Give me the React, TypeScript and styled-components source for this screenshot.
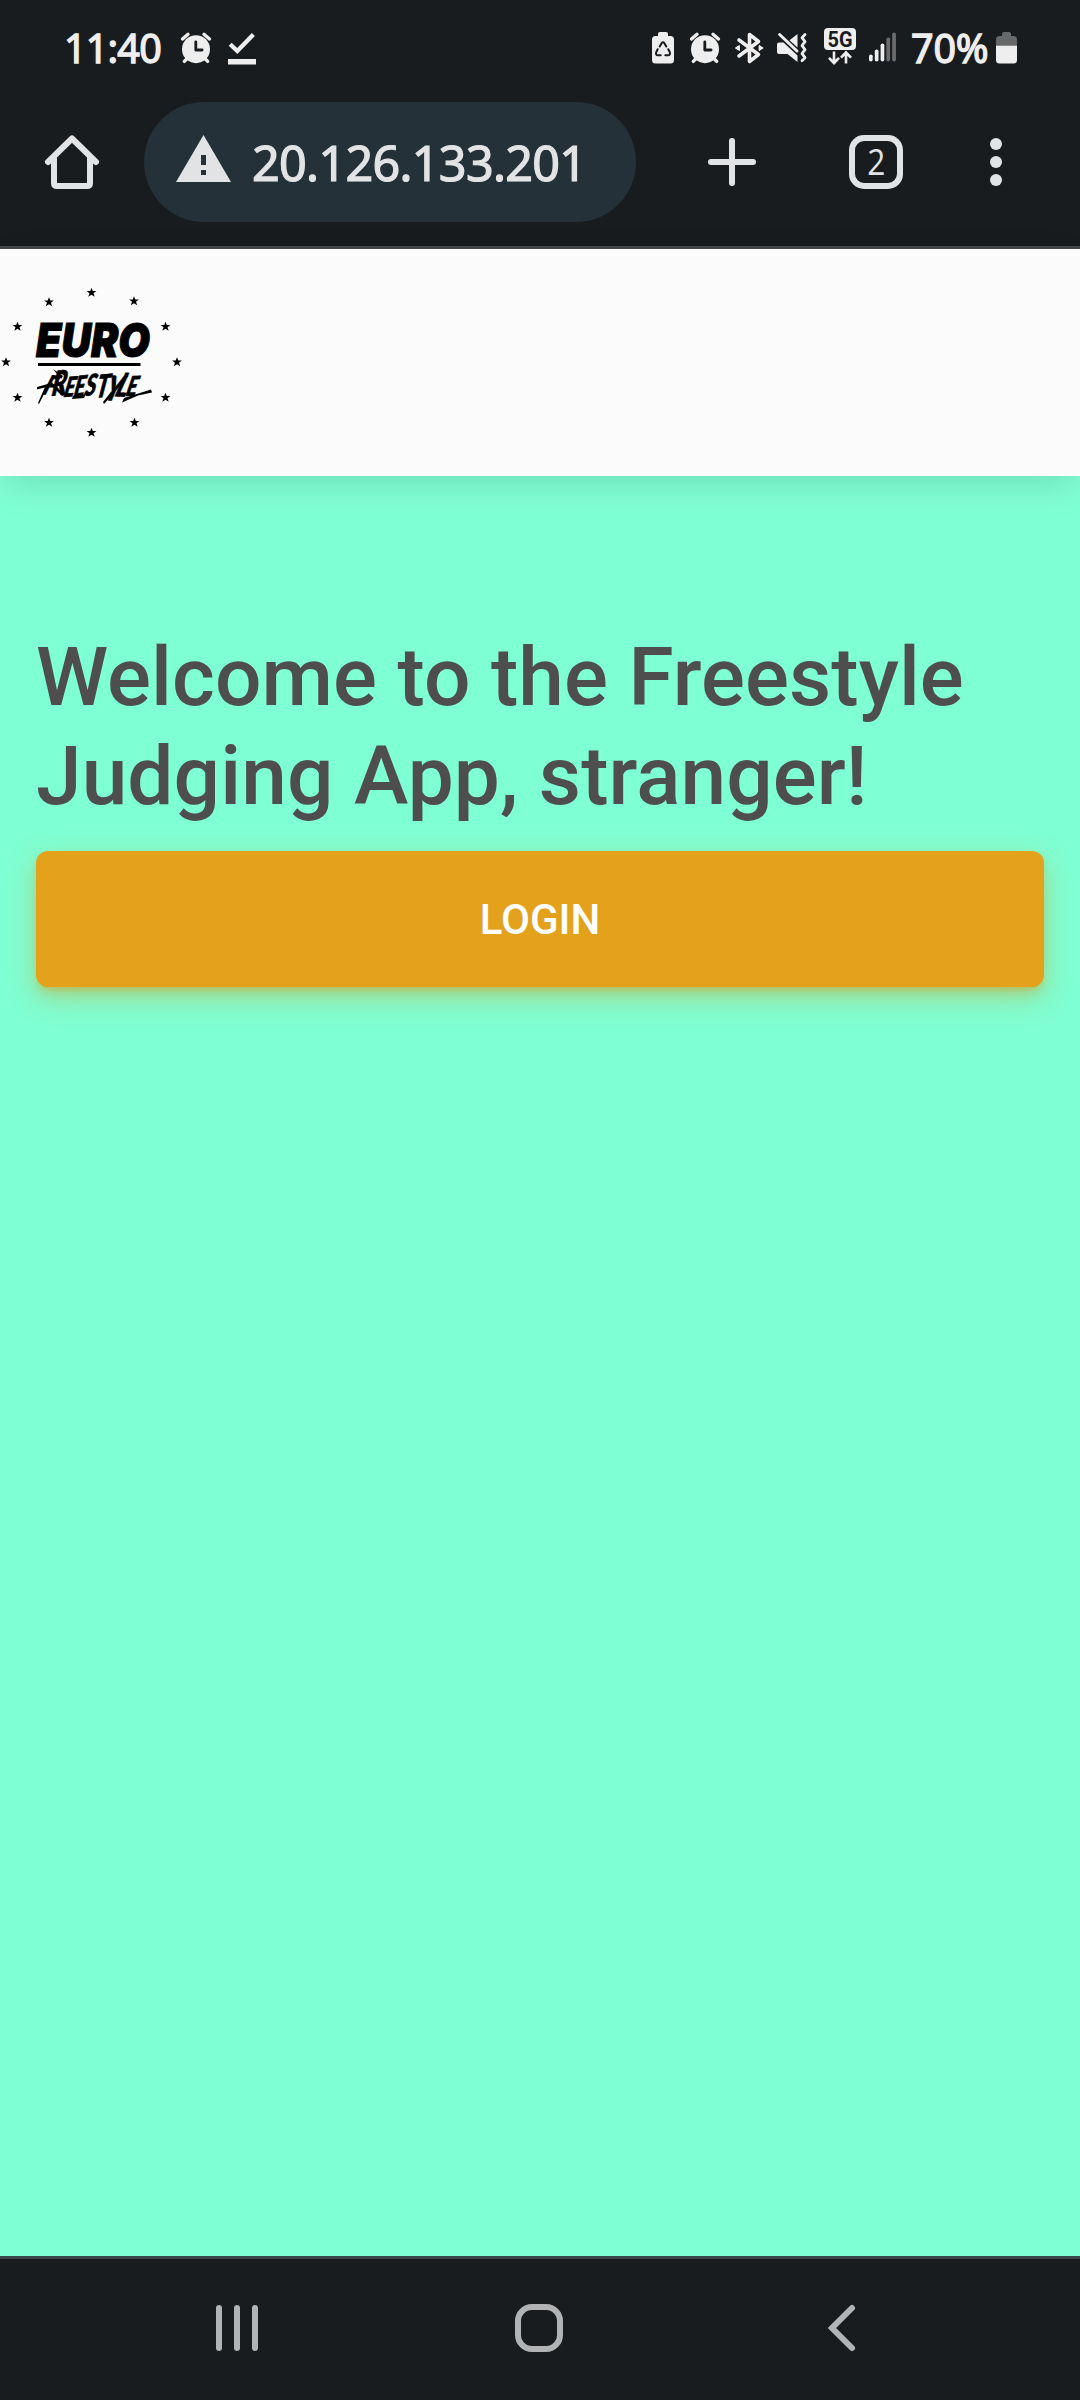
import React from "react";
import styled, { createGlobalStyle } from "styled-components";

const colors = {
  chrome: "#191c1e",
  status: "#eeeeee",
  toolbar: "#e2e3e5",
  pill: "#243138",
  mint: "#7fffd4",
  heading: "#4e4e4e",
  accent: "#e3a11c",
  nav: "#b2b3b5",
};

const GlobalStyle = createGlobalStyle`
  * { box-sizing: border-box; }
  html, body { margin: 0; padding: 0; background: ${colors.chrome}; }
`;

const Screen = styled.div`
  display: flex;
  flex-direction: column;
  width: 1080px;
  height: 2400px;
  overflow: hidden;
  font-family: Roboto, sans-serif;
`;

const StatusBar = styled.header`
  display: flex;
  justify-content: space-between;
  height: 90px;
  padding: 0 63px 0 64px;
  background: ${colors.chrome};
  color: ${colors.status};
`;

const StatusGroup = styled.div`
  display: flex;
  align-items: center;
  height: 96px;
`;

const StatusText = styled.span<{ $width: number; $spacing?: number }>`
  width: ${(p) => p.$width}px;
  font: 400 39.5px/54px "Noto Sans", sans-serif;
  letter-spacing: ${(p) => p.$spacing ?? 0}px;
  -webkit-text-stroke: 1.3px currentColor;
  white-space: nowrap;
`;

const Glyph = styled.svg<{ $w: number; $h: number; $gap?: number }>`
  display: block;
  flex: none;
  width: ${(p) => p.$w}px;
  height: ${(p) => p.$h}px;
  margin-left: ${(p) => p.$gap ?? 0}px;
  overflow: visible;
`;

const Toolbar = styled.div`
  display: flex;
  align-items: center;
  height: 159px;
  padding: 0 78px 12px 45px;
  background: ${colors.chrome};
  border-bottom: 3px solid #43474a;
  color: ${colors.toolbar};
`;

const AddressBar = styled.div`
  display: flex;
  align-items: center;
  width: 492px;
  height: 120px;
  margin-left: 45px;
  padding-left: 32px;
  border-radius: 60px;
  background: ${colors.pill};
`;

const Address = styled.span`
  margin-left: 21px;
  font: 400 48.5px/66px "Noto Sans", sans-serif;
  letter-spacing: -0.7px;
  -webkit-text-stroke: 1.2px currentColor;
  white-space: nowrap;
`;

const TabCounter = styled.div`
  display: flex;
  align-items: center;
  justify-content: center;
  width: 54px;
  height: 54px;
  margin-left: 93px;
  border: 6px solid ${colors.toolbar};
  border-radius: 15px;
`;

const TabCount = styled.span`
  font: 400 36px/42px "Open Sans", sans-serif;
  transform: scaleX(0.88);
`;

const Page = styled.main`
  display: flex;
  flex-direction: column;
  height: 2007px;
  background: ${colors.mint};
`;

const Brand = styled.div`
  height: 227px;
  background: #fbfbfb;
  box-shadow: 0 12px 40px 0 rgba(0, 0, 0, 0.06), 0 14px 26px -10px rgba(0, 0, 0, 0.08);
`;

const Content = styled.section`
  display: flex;
  flex-direction: column;
  padding: 152px 36px 0;
`;

const Heading = styled.h1`
  margin: 0 0 25px;
  color: ${colors.heading};
  font: 500 82px/99px Roboto, sans-serif;
  letter-spacing: 0.08px;
`;

const LoginButton = styled.button`
  height: 136px;
  padding: 2px 0 0;
  border: 0;
  border-radius: 12px;
  background: ${colors.accent};
  box-shadow: 0 6px 6px 0 rgba(227, 161, 28, 0.18), 0 9px 3px -6px rgba(227, 161, 28, 0.2),
    0 10px 28px 0 rgba(215, 150, 28, 0.42);
  color: #fff;
  font: 500 42px/60px Roboto, sans-serif;
  text-transform: uppercase;
`;

const NavBar = styled.nav`
  display: flex;
  align-items: center;
  height: 144px;
  padding: 0 0 3px 216px;
  background: ${colors.chrome};
  border-top: 3px solid #394548;
  color: ${colors.nav};
`;

const AlarmIcon = ({ gap }: { gap: number }) => (
  <Glyph $w={32} $h={32} $gap={gap} viewBox="0 0 32 32">
    <path
      d="M2.5 7 8 2.3M29.5 7 24 2.3M7.2 26.5 4.3 29.4M24.8 26.5l2.9 2.9"
      stroke="currentColor"
      strokeWidth="3.4"
      strokeLinecap="round"
    />
    <circle cx="16" cy="17.2" r="14" fill="currentColor" />
    <path d="M15.8 10v8h6.3" fill="none" stroke={colors.chrome} strokeWidth="2.8" strokeLinecap="round" strokeLinejoin="round" />
  </Glyph>
);

const DownloadDoneIcon = () => (
  <Glyph $w={28} $h={33} $gap={16} viewBox="0 0 28 33">
    <path d="M2.2 12.2 9.3 19 25.4 2.6" fill="none" stroke="currentColor" strokeWidth="4.3" />
    <path d="M0 27h28v5.5H0z" fill="currentColor" />
  </Glyph>
);

const EcoBatteryIcon = () => (
  <Glyph $w={22} $h={32} viewBox="0 0 22 32">
    <path d="M6 4V2q0-2 2-2h6q2 0 2 2v2h2.500q3.500 0 3.500 3.500v20.500q0 3.500-3.500 3.500h-15Q0 31.500 0 28V7.500Q0 4 3.500 4z" fill="currentColor" />
    <g fill="none" stroke={colors.chrome} strokeWidth="2" strokeLinecap="round" strokeLinejoin="round">
      <path d="M7.700 14.500 9.600 11.200q1.400-2 2.800 0l1.900 3.300" />
      <path d="M5.700 17.200 4.200 20.200q-.8 3 1.800 3h2.700" />
      <path d="M16.300 17.200l1.500 3q.8 3-1.800 3h-2.700" />
    </g>
  </Glyph>
);

const BluetoothIcon = () => (
  <Glyph $w={28} $h={32} $gap={14} viewBox="0 0 28 32">
    <path
      d="M4 8 23.500 22.500 14.500 29.500V2.500L23.500 9.500 4 24"
      fill="none"
      stroke="currentColor"
      strokeWidth="3.600"
      strokeLinecap="round"
      strokeLinejoin="round"
    />
    <path d="M.7 16 4.200 13.800v4.400zM27.800 16 24.300 13.800v4.400z" fill="currentColor" stroke="currentColor" strokeWidth="1.400" strokeLinejoin="round" />
  </Glyph>
);

const MutedVibrateIcon = () => (
  <Glyph $w={30} $h={32} $gap={14} viewBox="0 0 30 32">
    <path d="M12.500 8.200 20.500 2v13.500zM2 10.500h4.500L20.500 23.500V30L10.500 22H2q-2 0-2-2v-7.500q0-2 2-2z" fill="currentColor" />
    <path d="M2.600 2.500 20 19" stroke="currentColor" strokeWidth="3" strokeLinecap="round" />
    <path
      d="M28 2.500l-3 3.200 3 4-3 4 3 4-3 4 3 4-3 3"
      fill="none"
      stroke="currentColor"
      strokeWidth="2.800"
      strokeLinecap="round"
      strokeLinejoin="round"
    />
  </Glyph>
);

const FiveGIcon = () => (
  <Glyph $w={32} $h={38} $gap={17} viewBox="0 0 32 38">
    <rect y="-1" width="32" height="22" rx="4" fill="currentColor" />
    <text x="16" y="17.700" textAnchor="middle" textLength="25" lengthAdjust="spacingAndGlyphs" fontFamily="Roboto, sans-serif" fontWeight="700" fontSize="21.500" fill={colors.chrome}>
      5G
    </text>
    <path
      d="M10 22.500v11M5 28.800 10 34l5-5.200M22 34.500V24M17 28.700 22 23.500l5 5.200"
      fill="none"
      stroke="currentColor"
      strokeWidth="2.600"
    />
  </Glyph>
);

const signalBars = [7, 12, 18, 24, 29];

const SignalIcon = () => (
  <Glyph $w={28} $h={30} $gap={13} viewBox="0 0 28 30">
    {signalBars.map((height, i) => (
      <rect key={height} x={i * 5.8} y={28.500 - height} width="3.700" height={height} rx="1.800" fill="currentColor" opacity={i > 2 ? 0.38 : 1} />
    ))}
  </Glyph>
);

const BatteryIcon = () => (
  <Glyph $w={21} $h={32} viewBox="0 0 21 32">
    <path d="M6 4V2q0-2 2-2h5q2 0 2 2v2h2.500Q21 4 21 7.500V14H0V7.500Q0 4 3.500 4z" fill="#666869" />
    <path d="M0 13.700h21V28q0 3.500-3.500 3.500h-14Q0 31.500 0 28z" fill="currentColor" />
  </Glyph>
);

const HomeIcon = () => (
  <Glyph $w={54} $h={54} viewBox="0 0 54 54">
    <path
      d="M3 27 27 3.500 51 27M9 22v26q0 3 3 3h30q3 0 3-3V22"
      fill="none"
      stroke="currentColor"
      strokeWidth="6"
      strokeLinecap="round"
      strokeLinejoin="round"
    />
  </Glyph>
);

const WarningIcon = () => (
  <Glyph $w={55} $h={54} viewBox="0 0 55 54">
    <path d="M27.500 0 55 47H0zM25 20v10h5V20zM25 35v5h5v-5z" fill="currentColor" fillRule="evenodd" />
  </Glyph>
);

const PlusIcon = () => (
  <Glyph $w={48} $h={48} $gap={72} viewBox="0 0 48 48">
    <path d="M24 3v42M3 24h42" stroke="currentColor" strokeWidth="6" strokeLinecap="round" />
  </Glyph>
);

const MoreIcon = () => (
  <Glyph $w={12} $h={48} $gap={87} viewBox="0 0 12 48">
    {[6, 24, 42].map((cy) => (
      <circle key={cy} cx="6" cy={cy} r="6" fill="currentColor" />
    ))}
  </Glyph>
);

const stars = [
  [91.5, 43.5], [134, 52], [165.5, 77.5], [177, 113], [165.5, 148.5], [134.5, 173.5],
  [91.5, 183.5], [49, 173.5], [17.5, 148.5], [6, 113], [17.5, 77.5], [49, 53],
];

const letters = [
  { char: "F", x: 42, y: 145, turn: 6, size: 27 },
  { char: "R", x: 51, y: 147, turn: -8, size: 33 },
  { char: "E", x: 63, y: 148, turn: -4, size: 27 },
  { char: "E", x: 73, y: 148, turn: -6, size: 28 },
  { char: "S", x: 84, y: 147, turn: -6, size: 29 },
  { char: "T", x: 95, y: 149, turn: -6, size: 31 },
  { char: "Y", x: 103, y: 151, turn: 2, size: 34 },
  { char: "L", x: 114, y: 147, turn: 4, size: 33 },
  { char: "E", x: 125, y: 147, turn: -2, size: 27 },
];

const EuroFreestyleLogo = () => (
  <Glyph $w={200} $h={227} viewBox="0 0 200 227">
    {stars.map(([x, y]) => (
      <path
        key={`${x}-${y}`}
        transform={`translate(${x} ${y})`}
        d="M0-4.800 1.300-1.500H4.900L2 .7 3.200 4.300 0 2.200-3.200 4.300-2 .7-4.900-1.500H-1.300z"
      />
    ))}
    <text x="36" y="107.500" textLength="114" lengthAdjust="spacingAndGlyphs" fontFamily="Inter, sans-serif" fontStyle="italic" fontWeight="900" fontSize="47" stroke="#000" strokeWidth="1">
      EURO
    </text>
    <path d="M38 114h102.500v3H38z" />
    {letters.map(({ char, x, y, turn, size }) => (
      <text key={x} transform={`translate(${x} ${y}) rotate(${turn}) skewX(-16) scale(.74 1)`} fontFamily="Lato, sans-serif" fontStyle="italic" fontWeight="900" fontSize={size} stroke="#000" strokeWidth="0.700">
        {char}
      </text>
    ))}
    <path d="M37 138l16-4.500-1 3-15 4zM45 138l2 1-8 16-1-1zM53 120l10 7-2 3zM57 138l8 8-3 1-7-7zM124 149l27-8.500 1 3-14 3-16 7zM73 147l13-2-2 4-12 1zM103 153l8-10 2 2-9 10z" />
  </Glyph>
);

const RecentsIcon = () => (
  <Glyph $w={42} $h={48} viewBox="0 0 42 48">
    {[0, 18, 36].map((x) => (
      <rect key={x} x={x} y="1" width="6" height="46" rx="3" fill="currentColor" />
    ))}
  </Glyph>
);

const NavHomeIcon = () => (
  <Glyph $w={48} $h={48} $gap={257} viewBox="0 0 48 48">
    <rect x="3" y="3" width="42" height="42" rx="14" fill="none" stroke="currentColor" strokeWidth="6" />
  </Glyph>
);

const BackIcon = () => (
  <Glyph $w={27} $h={48} $gap={265} viewBox="0 0 27 48">
    <path d="M24 4 4 24l20 20" fill="none" stroke="currentColor" strokeWidth="6" strokeLinecap="round" />
  </Glyph>
);

export default function App() {
  return (
    <>
      <GlobalStyle />
      <Screen>
        <StatusBar>
          <StatusGroup>
            <StatusText $width={100} $spacing={-0.8}>11:40</StatusText>
            <AlarmIcon gap={16} />
            <DownloadDoneIcon />
          </StatusGroup>
          <StatusGroup>
            <EcoBatteryIcon />
            <AlarmIcon gap={15} />
            <BluetoothIcon />
            <MutedVibrateIcon />
            <FiveGIcon />
            <SignalIcon />
            <Glyph as="span" $w={14} $h={1} />
            <StatusText $width={85} $spacing={-0.2}>70%</StatusText>
            <BatteryIcon />
          </StatusGroup>
        </StatusBar>
        <Toolbar>
          <HomeIcon />
          <AddressBar>
            <WarningIcon />
            <Address>20.126.133.201</Address>
          </AddressBar>
          <PlusIcon />
          <TabCounter>
            <TabCount>2</TabCount>
          </TabCounter>
          <MoreIcon />
        </Toolbar>
        <Page>
          <Brand>
            <EuroFreestyleLogo />
          </Brand>
          <Content>
            <Heading>Welcome to the Freestyle Judging App, stranger!</Heading>
            <LoginButton>Login</LoginButton>
          </Content>
        </Page>
        <NavBar>
          <RecentsIcon />
          <NavHomeIcon />
          <BackIcon />
        </NavBar>
      </Screen>
    </>
  );
}
